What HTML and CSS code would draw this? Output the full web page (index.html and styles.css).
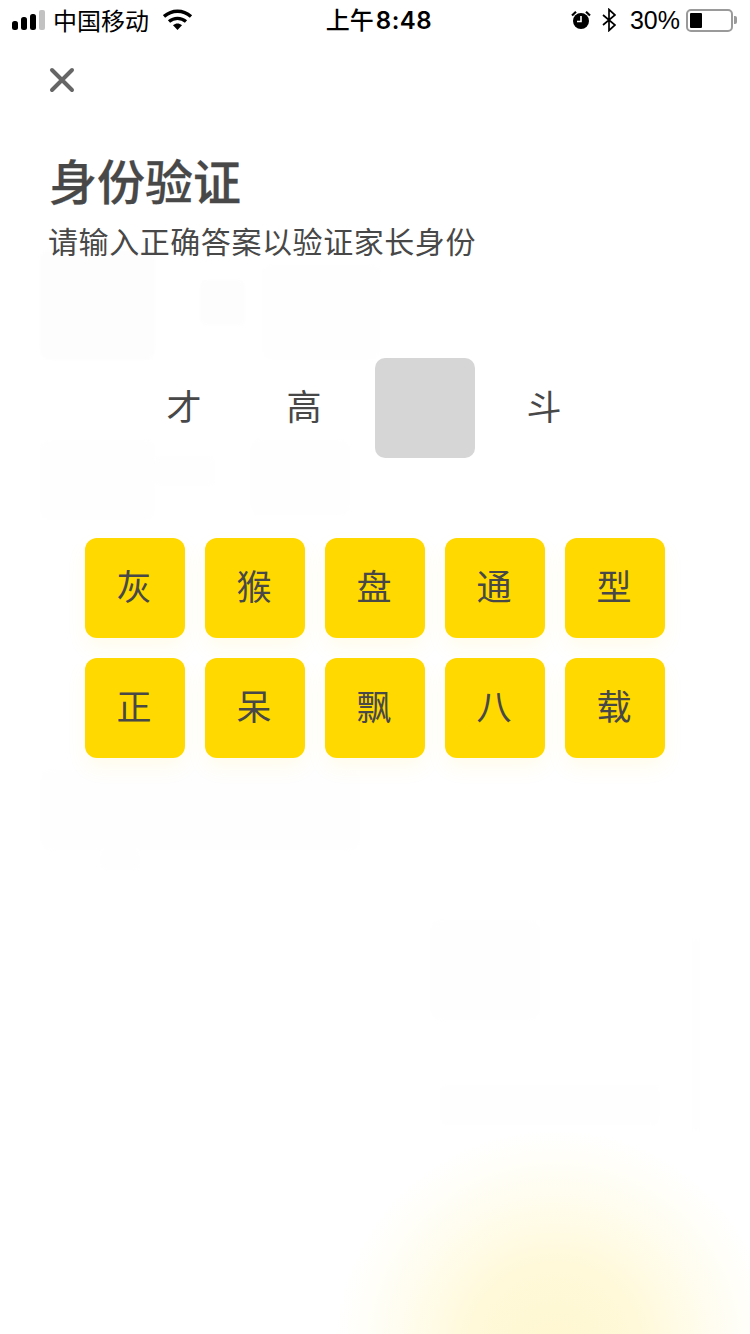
FILE: index.html
```html
<!DOCTYPE html>
<html lang="zh-CN">
<head>
<meta charset="utf-8">
<title>身份验证</title>
<link rel="stylesheet" href="styles.css">
</head>
<body>
<div class="screen">
<svg class="ghost" width="750" height="1334" viewBox="0 0 750 1334">
  <g fill="#fefdfe">
    <rect x="40" y="250" width="115" height="110" rx="10"/>
    <rect x="200" y="280" width="45" height="45" rx="6"/>
  </g>
  <g fill="#fefefe">
    <rect x="262" y="265" width="118" height="95" rx="10"/>
    <rect x="40" y="440" width="115" height="80" rx="10"/>
    <rect x="155" y="456" width="60" height="30" rx="6"/>
    <rect x="250" y="440" width="100" height="75" rx="10"/>
    <rect x="40" y="770" width="320" height="80" rx="12"/>
    <rect x="100" y="850" width="40" height="20" rx="6"/>
    <rect x="430" y="920" width="110" height="100" rx="12"/>
    <rect x="692" y="940" width="8" height="190" rx="3"/>
    <rect x="440" y="1085" width="220" height="40" rx="8"/>
  </g>
</svg>
<div class="glow"></div>
<header class="status">
  <div class="status-left">
    <svg class="signal" width="33" height="20" viewBox="0 0 33 20"><rect x="0" y="11" width="6" height="9" rx="2.5" fill="#000"/><rect x="9" y="7" width="6" height="13" rx="2.5" fill="#000"/><rect x="18" y="4" width="6" height="16" rx="2.5" fill="#000"/><rect x="27" y="0" width="6" height="20" rx="2" fill="#c2c2c2"/></svg>
    <span class="carrier">中国移动</span>
    <svg class="wifi" width="30" height="22" viewBox="0 0 30 22"><path d="M1 7.5C9 .5 20 .5 28 7.5" fill="none" stroke="#000" stroke-width="3.4"/><path d="M6 12.5c5-4.2 12-4.2 17 0" fill="none" stroke="#000" stroke-width="3.4"/><path d="M10 16.2c3-2.4 6-2.4 9 0l-4.5 4.8z" fill="#000"/></svg>
  </div>
  <div class="clock">上午<span class="clock-digits">8:48</span></div>
  <div class="status-right">
    <svg class="alarm" width="20" height="20" viewBox="0 0 20 20"><circle cx="10" cy="11" r="8" fill="#000"/><path d="M10 6v5.5H6" fill="none" stroke="#fff" stroke-width="1.6"/><path d="M1 5.5 5 1.8M19 5.5 15 1.8" stroke="#000" stroke-width="2.2"/></svg>
    <svg class="bt" width="14" height="24" viewBox="0 0 14 24"><path d="M1 7 13 17 7 22.5V1.5L13 7 1 17" fill="none" stroke="#000" stroke-width="1.7"/></svg>
    <span class="percent">30%</span>
    <div class="battery"><div class="battery-body"><div class="battery-level"></div></div><div class="battery-tip"></div></div>
  </div>
</header>
<main class="page">
  <svg class="close" width="26" height="26" viewBox="0 0 26 26"><path d="M3 3 23 23M23 3 3 23" stroke="#666" stroke-width="4" stroke-linecap="round"/></svg>
  <h1 class="title">身份验证</h1>
  <p class="subtitle">请输入正确答案以验证家长身份</p>
  <div class="idiom">
    <div class="cell">才</div>
    <div class="cell">高</div>
    <div class="cell blank"></div>
    <div class="cell">斗</div>
  </div>
  <div class="keys">
    <button class="key">灰</button>
    <button class="key">猴</button>
    <button class="key">盘</button>
    <button class="key">通</button>
    <button class="key">型</button>
    <button class="key">正</button>
    <button class="key">呆</button>
    <button class="key">飘</button>
    <button class="key">八</button>
    <button class="key">载</button>
  </div>
</main>
</div>
</body>
</html>
```
FILE: styles.css
```css
* { box-sizing: border-box; }
html, body { margin: 0; padding: 0; }
body { background: #fff; }
.screen {
  position: relative;
  width: 750px;
  height: 1334px;
  overflow: hidden;
  background: #fff;
  color: #484848;
  font-family: "Noto Sans CJK SC", "Noto Sans", sans-serif;
}
.ghost { position: absolute; left: 0; top: 0; filter: blur(1px); }
.glow {
  position: absolute;
  left: 335px;
  top: 1130px;
  width: 440px;
  height: 440px;
  border-radius: 50%;
  background: radial-gradient(closest-side, #fff7d0 0%, #fff9da 40%, #fffdf0 72%, rgba(255, 255, 255, 0) 100%);
}
.status {
  position: relative;
  height: 40px;
  display: flex;
  justify-content: space-between;
  align-items: center;
  color: #000;
  padding: 0 13px 0 12px;
}
.status-left, .status-right { display: flex; align-items: center; }
.status-left { width: 249px; }
.status-right { width: 240px; justify-content: flex-end; }
.signal { margin-right: 8px; flex: none; }
.carrier { font-size: 24px; line-height: 40px; white-space: nowrap; }
.wifi { margin-left: 14px; flex: none; }
.clock { font-size: 24px; font-weight: 500; line-height: 40px; white-space: nowrap; }
.clock-digits { font-family: Inter, sans-serif; font-size: 24px; font-weight: 600; letter-spacing: 0.5px; margin-left: 2px; }
.alarm { margin-right: 11px; }
.bt { margin-right: 14px; }
.percent { font-family: "Liberation Sans", sans-serif; font-size: 25px; margin-right: 6px; line-height: 40px; }
.battery { display: flex; align-items: center; }
.battery-body { width: 47px; height: 23px; border: 2px solid #9a9a9a; border-radius: 5px; padding: 2px; }
.battery-level { width: 12px; height: 100%; background: #000; border-radius: 1px; }
.battery-tip { width: 3px; height: 8px; background: #9a9a9a; margin-left: 1px; border-radius: 0 2px 2px 0; }
.page { position: relative; padding: 27px 0 0 0; }
.close { display: block; margin-left: 49px; }
.title { margin: 58px 0 0 49px; font-size: 48px; font-weight: 500; -webkit-text-stroke: 0.3px #484848; line-height: 56px; color: #484848; }
.subtitle { margin: 11px 0 0 48px; font-size: 30px; line-height: 44px; letter-spacing: 0.57px; color: #484848; }
.idiom { margin-top: 96px; display: flex; justify-content: center; gap: 20px; padding-right: 20px; }
.cell { width: 100px; height: 100px; display: flex; align-items: center; justify-content: center; padding: 0 2px 7px 0; font-size: 35px; color: #484848; border-radius: 10px; }
.blank { background: #d6d6d6; }
.keys { margin: 80px auto 0; width: 580px; display: grid; grid-template-columns: repeat(5, 100px); gap: 20px; }
.key { width: 100px; height: 100px; border: 0; padding: 0 2px 7px 0; border-radius: 12px; background: #ffd900; color: #484848; font-family: inherit; font-size: 35px; box-shadow: 0 10px 20px rgba(255, 217, 0, 0.08); }
```
